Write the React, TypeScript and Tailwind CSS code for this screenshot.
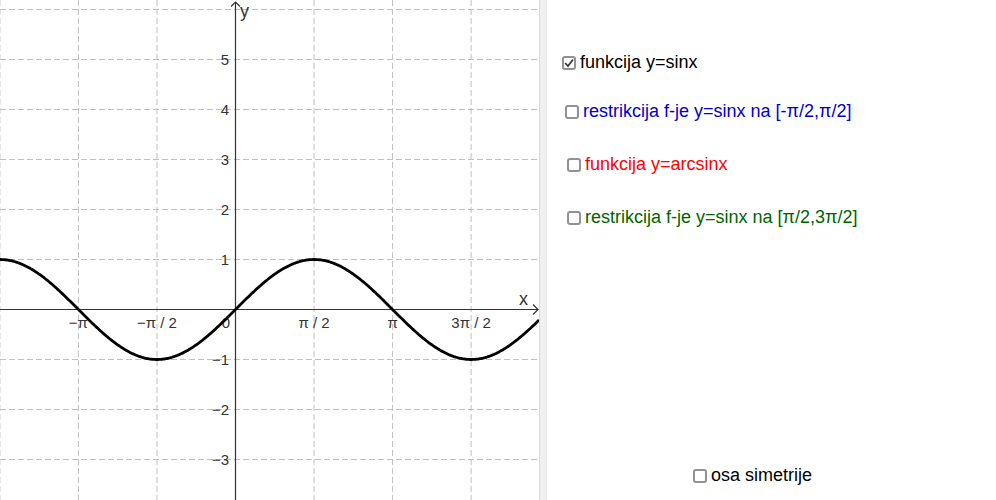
import React from "react"

// dimenzije i razmjera grafika (px po jedinici)
const W = 539
const H = 500
const OX = 235.5
const OY = 309.5
const S = 50

const font = '"Liberation Sans", Arial, sans-serif'

function sinPath() {
  let d = ""
  for (let px = 0; px <= W; px += 1) {
    const x = (px - OX) / S
    const y = OY - S * Math.sin(x)
    d += (px === 0 ? "M" : "L") + px + " " + y.toFixed(2) + " "
  }
  return d
}

const xLabels = [
  { k: -2, t: "−π" },
  { k: -1, t: "−π / 2" },
  { k: 1, t: "π / 2" },
  { k: 2, t: "π" },
  { k: 3, t: "3π / 2" },
]

function Graph() {
  const vLines = [-3, -2, -1, 1, 2, 3].map((k) => OX + k * S * (Math.PI / 2))
  const hLines = [6, 5, 4, 3, 2, 1, -1, -2, -3]

  return (
    <svg width={W} height={H} viewBox={`0 0 ${W} ${H}`} className="block shrink-0">
      {/* mreža */}
      <g stroke="#c0c0c0" strokeWidth={1} strokeDasharray="6 3">
        {vLines.map((x) => (
          <line key={x} x1={x} y1={0} x2={x} y2={H} />
        ))}
        {hLines.map((k) => (
          <line key={k} x1={0} y1={OY - k * S} x2={W} y2={OY - k * S} />
        ))}
      </g>

      {/* ose */}
      <g stroke="#333" strokeWidth={1.2} fill="none">
        <line x1={0} y1={OY} x2={538} y2={OY} />
        <line x1={OX} y1={2} x2={OX} y2={H} />
        <polyline points={`533,304.5 538,${OY} 533,314.5`} />
        <polyline points={`231,6.5 ${OX},2 240,6.5`} />
      </g>

      <g fontFamily={font} fill="#333" fontSize={15}>
        {[5, 4, 3, 2, 1, -1, -2, -3].map((k) => (
          <text key={k} x={229} y={OY - k * S + 5.3} textAnchor="end">
            {k < 0 ? "−" + Math.abs(k) : k}
          </text>
        ))}
        {xLabels.map((l) => (
          <text key={l.k} x={OX + l.k * S * (Math.PI / 2)} y={328} textAnchor="middle">
            {l.t}
          </text>
        ))}
        <text x={230} y={328} textAnchor="end">0</text>
        <text x={519} y={305} fontSize={18}>x</text>
        <text x={240} y={17} fontSize={18}>y</text>
      </g>

      {/* y = sin x */}
      <path d={sinPath()} stroke="#000" strokeWidth={2.8} fill="none" strokeLinejoin="round" />
    </svg>
  )
}

function Box({ checked }: { checked?: boolean }) {
  return (
    <span className="mt-[1px] box-border flex h-[14px] w-[14px] shrink-0 items-center justify-center rounded-[3px] border-2 border-[#929292] bg-white">
      {checked && (
        <svg width="10" height="10" viewBox="0 0 10 10">
          <polyline points="1.2,5 4,8 9,1.5" fill="none" stroke="#3c3c3c" strokeWidth={1.8} />
        </svg>
      )}
    </span>
  )
}

function Item({ label, color, checked, className }: { label: string; color: string; checked?: boolean; className: string }) {
  return (
    <div className={`flex h-[20px] items-center gap-[4px] ${className}`}>
      <Box checked={checked} />
      <span className={`whitespace-nowrap text-[18px] leading-[20px] ${color}`}>{label}</span>
    </div>
  )
}

export default function App() {
  return (
    <div className="flex h-[500px] w-[996px] overflow-hidden bg-white" style={{ fontFamily: font }}>
      <Graph />
      <div className="h-full w-[8px] shrink-0 border-l border-r border-l-[#d9d9d9] border-r-[#e6e6e6] bg-[#f0f0f0]" />
      <div className="flex flex-1 flex-col">
        <Item className="ml-[15px] mt-[52px]" color="text-black" checked label="funkcija y=sinx" />
        <Item className="ml-[18px] mt-[29px]" color="text-[#0000cc]" label="restrikcija f-je y=sinx na [-π/2,π/2]" />
        <Item className="ml-[20px] mt-[33px]" color="text-[#ff0000]" label="funkcija y=arcsinx" />
        <Item className="ml-[20px] mt-[33px]" color="text-[#006400]" label="restrikcija f-je y=sinx na [π/2,3π/2]" />
        <Item className="ml-[146px] mt-[238px]" color="text-black" label="osa simetrije" />
      </div>
    </div>
  )
}
